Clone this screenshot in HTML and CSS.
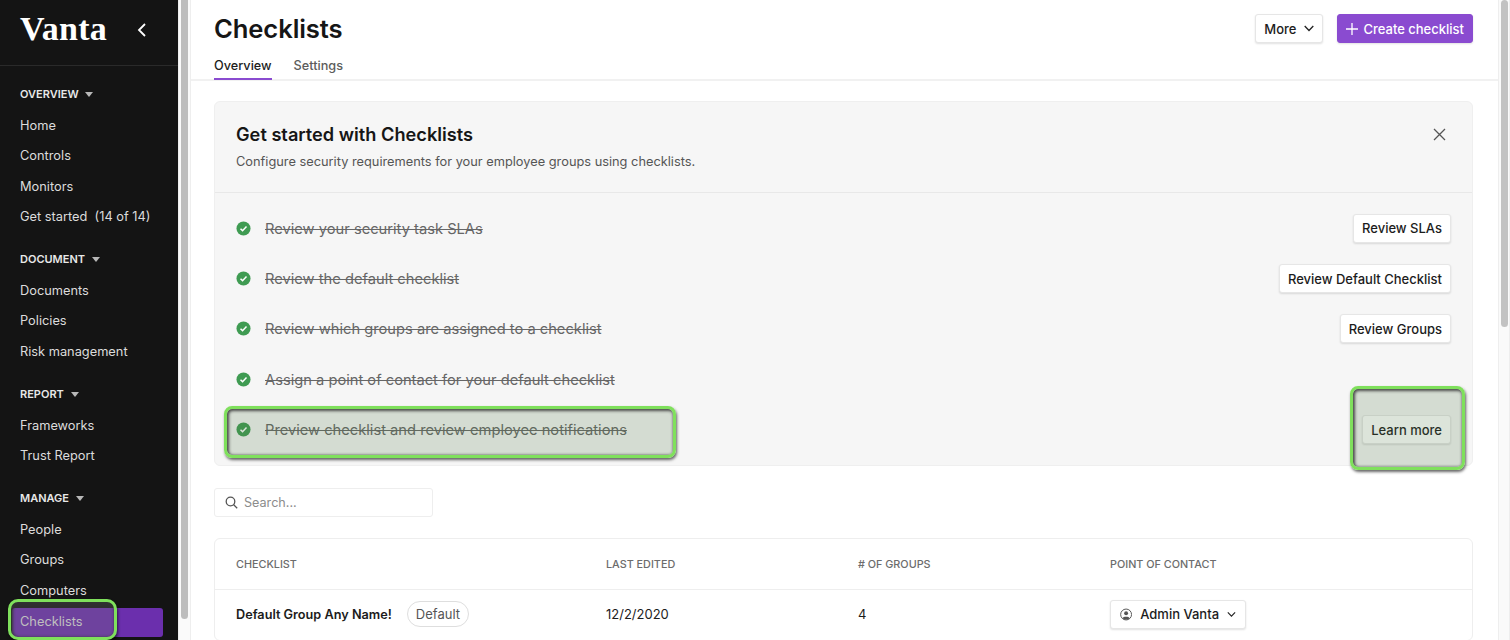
FILE: index.html
```html
<!DOCTYPE html>
<html lang="en">
<head>
<meta charset="utf-8">
<title>Checklists</title>
<link rel="stylesheet" href="styles.css">
</head>
<body>
<div class="app">
  <aside class="sidebar">
    <div class="brand">
      <span class="logo">Vanta</span>
      <svg class="collapse" width="12" height="16" viewBox="0 0 12 16"><path d="M9 2 3 8l6 6" fill="none" stroke="#fff" stroke-width="1.8"/></svg>
    </div>
    <nav class="nav">
      <section class="group">
        <h4 class="group-title">OVERVIEW <i class="caret"></i></h4>
        <a class="item">Home</a><a class="item">Controls</a><a class="item">Monitors</a><a class="item">Get started&nbsp; (14 of 14)</a>
      </section>
      <section class="group">
        <h4 class="group-title">DOCUMENT <i class="caret"></i></h4>
        <a class="item">Documents</a><a class="item">Policies</a><a class="item">Risk management</a>
      </section>
      <section class="group">
        <h4 class="group-title">REPORT <i class="caret"></i></h4>
        <a class="item">Frameworks</a><a class="item">Trust Report</a>
      </section>
      <section class="group">
        <h4 class="group-title">MANAGE <i class="caret"></i></h4>
        <a class="item">People</a><a class="item">Groups</a><a class="item">Computers</a><a class="item active">Checklists</a>
      </section>
    </nav>
    <div class="hl hl-nav"></div>
  </aside>
  <div class="track track-side"><div class="thumb"></div></div>
  <main class="main">
    <header class="page-head">
      <div class="head-top">
        <h1 class="title">Checklists</h1>
        <div class="actions">
          <button class="btn">More <svg width="10" height="7" viewBox="0 0 10 7"><path d="M.7 1 5 5.500 9.300 1" fill="none" stroke="#222" stroke-width="1.3"/></svg></button>
          <button class="btn primary"><svg width="12" height="12" viewBox="0 0 12 12"><path d="M6 0v12M0 6h12" stroke="#fff" stroke-width="1.3"/></svg>Create checklist</button>
        </div>
      </div>
      <div class="tabs"><a class="tab on">Overview</a><a class="tab">Settings</a></div>
    </header>
    <div class="content">
      <section class="card">
        <div class="card-head">
          <div>
            <h2 class="card-title">Get started with Checklists</h2>
            <p class="card-sub">Configure security requirements for your employee groups using checklists.</p>
          </div>
          <svg class="close" width="13" height="13" viewBox="0 0 13 13"><path d="M1 1l11 11M12 1 1 12" stroke="#555" stroke-width="1.3"/></svg>
        </div>
        <div class="rows">
          <div class="row"><svg class="check" viewBox="0 0 16 16"><circle cx="8" cy="8" r="7.5" fill="#3f9b52"/><path d="M4.8 8.2 7 10.3l4.2-4.4" fill="none" stroke="#fff" stroke-width="1.6"/></svg><s class="done">Review your security task SLAs</s><button class="btn">Review SLAs</button></div>
          <div class="row"><svg class="check" viewBox="0 0 16 16"><circle cx="8" cy="8" r="7.5" fill="#3f9b52"/><path d="M4.8 8.2 7 10.3l4.2-4.4" fill="none" stroke="#fff" stroke-width="1.6"/></svg><s class="done">Review the default checklist</s><button class="btn">Review Default Checklist</button></div>
          <div class="row"><svg class="check" viewBox="0 0 16 16"><circle cx="8" cy="8" r="7.5" fill="#3f9b52"/><path d="M4.8 8.2 7 10.3l4.2-4.4" fill="none" stroke="#fff" stroke-width="1.6"/></svg><s class="done">Review which groups are assigned to a checklist</s><button class="btn">Review Groups</button></div>
          <div class="row"><svg class="check" viewBox="0 0 16 16"><circle cx="8" cy="8" r="7.5" fill="#3f9b52"/><path d="M4.8 8.2 7 10.3l4.2-4.4" fill="none" stroke="#fff" stroke-width="1.6"/></svg><s class="done">Assign a point of contact for your default checklist</s></div>
          <div class="row"><svg class="check" viewBox="0 0 16 16"><circle cx="8" cy="8" r="7.5" fill="#3f9b52"/><path d="M4.8 8.2 7 10.3l4.2-4.4" fill="none" stroke="#fff" stroke-width="1.6"/></svg><s class="done">Preview checklist and review employee notifications</s><button class="btn">Learn more</button></div>
        </div>
      </section>
      <div class="search">
        <svg width="13" height="13" viewBox="0 0 13 13"><circle cx="5.5" cy="5.5" r="4.3" fill="none" stroke="#555" stroke-width="1.3"/><path d="m8.7 8.7 3.5 3.5" stroke="#555" stroke-width="1.3"/></svg>
        <span>Search...</span>
      </div>
      <section class="table">
        <div class="tr th"><span>CHECKLIST</span><span>LAST EDITED</span><span># OF GROUPS</span><span>POINT OF CONTACT</span></div>
        <div class="tr td">
          <span class="name"><b>Default Group Any Name!</b><em class="pill">Default</em></span>
          <span>12/2/2020</span>
          <span>4</span>
          <span><button class="btn contact"><svg width="15" height="15" viewBox="0 0 15 15"><circle cx="7.5" cy="7.5" r="6.7" fill="none" stroke="#555" stroke-width="1.2"/><circle cx="7.500" cy="6" r="2.400" fill="#555"/><path d="M3.200 12c1-2.200 7.600-2.200 8.600 0-2 2-6.600 2-8.600 0z" fill="#555"/></svg><span class="contact-name">Admin Vanta</span><svg width="11" height="7" viewBox="0 0 11 7"><path d="M1 1l4.500 4.500L10 1" fill="none" stroke="#222" stroke-width="1.4"/></svg></button></span>
        </div>
      </section>
    </div>
    <div class="hl hl-row"></div>
    <div class="hl hl-btn"></div>
  </main>
  <div class="track track-main"><div class="thumb thumb-main"></div></div>
</div>
</body>
</html>
```
FILE: styles.css
```css
* { box-sizing: border-box; }
html, body { margin: 0; height: 640px; overflow: hidden; }
body { font-family: Inter, "Liberation Sans", sans-serif; color: #1c1c1c; background: #fff; font-size: 13px; }
.app { display: flex; height: 640px; overflow: hidden; }

.sidebar { position: relative; width: 178px; flex: none; background: #141414; color: #e4e4e4; overflow: hidden; }
.brand { height: 66px; padding: 10px 30px 0 20px; display: flex; justify-content: space-between; align-items: flex-start; border-bottom: 1px solid #2a2a2a; }
.logo { font-family: "Liberation Serif", serif; font-weight: 700; font-size: 34px; line-height: 38px; color: #fff; letter-spacing: 0.3px; }
.collapse { margin-top: 12px; }
.nav { padding-top: 16px; }
.group { margin-bottom: 14.5px; }
.group-title { margin: 0 0 4.5px; padding-left: 20px; height: 24px; line-height: 24px; font-size: 11px; font-weight: 600; color: #e8e8e8; }
.caret { display: inline-block; width: 0; height: 0; margin-left: 4px; vertical-align: 1px; border-left: 4px solid transparent; border-right: 4px solid transparent; border-top: 5px solid #b8b8b8; }
.item { display: block; height: 30.6px; line-height: 30.6px; padding-left: 20px; font-size: 12.8px; color: #dcdcdc; }
.item.active { height: 29px; margin: 1.5px 15px 0 12px; padding-left: 8px; line-height: 28px; background: #6b2fad; border-radius: 3px; }

.track { flex: none; background: #fafafa; border-left: 1px solid #eee; border-right: 1px solid #eee; }
.track-side { width: 13px; padding: 0 2px; }
.thumb { width: 7px; height: 619px; background: #bdbdbd; border-radius: 0 0 4px 4px; }
.track-main { width: 12px; padding: 0 2px; }
.thumb-main { height: 327px; border-radius: 4px; background: #c2c2c2; }

.main { position: relative; flex: 1; min-width: 0; }
.page-head { height: 81px; padding: 14px 25px 0 23px; border-bottom: 2px solid #f1f1f1; }
.head-top { display: flex; justify-content: space-between; align-items: flex-start; height: 38px; }
.title { margin: 0; font-size: 25.6px; line-height: 30px; font-weight: 600; letter-spacing: -0.1px; color: #161616; }
.actions { display: flex; gap: 14px; align-items: center; }
.btn { display: inline-flex; align-items: center; justify-content: center; height: 29px; padding: 0 8px; font: 500 13px Inter, "Liberation Sans", sans-serif; color: #1c1c1c; background: #fff; border: 1px solid #e6e6e6; border-radius: 3px; box-shadow: 0 1px 2px rgba(0,0,0,.12); white-space: nowrap; }
.actions .btn svg { margin-left: 8px; }
.btn.primary { color: #fff; background: #8a4bd0; border-color: #8a4bd0; }
.actions .btn.primary svg { margin: 0 5px 0 0; }
.tabs { display: flex; gap: 22px; height: 28px; }
.tab { font-size: 12.7px; line-height: 28px; height: 28px; color: #5c5c5c; font-weight: 500; }
.tab.on { color: #1c1c1c; border-bottom: 2px solid #8a4bd0; }

.content { padding: 20px 25px 0 23px; }
.card { height: 365px; background: #f6f6f6; border: 1px solid #efefef; border-radius: 6px; }
.card-head { height: 91px; padding: 21px 26px 0 21px; display: flex; justify-content: space-between; align-items: flex-start; border-bottom: 1px solid #e8e8e8; }
.card-title { margin: 0 0 8px; font-size: 18.2px; line-height: 22px; font-weight: 600; color: #161616; }
.card-sub { margin: 0; font-size: 12.8px; line-height: 18px; color: #555; }
.close { margin-top: 5px; }
.rows { padding: 10px 21px 0; }
.row { display: flex; align-items: center; height: 50.4px; }
.check { width: 15px; height: 15px; flex: none; margin-right: 14px; }
.done { flex: 1; margin-top: 1px; font-size: 14.7px; color: #666; }
.hl { position: absolute; border: 3px solid #7fe05c; border-radius: 8px; box-shadow: inset 1px 1px 3px 1px rgba(50,50,50,.85), 1px 2px 3px rgba(0,0,0,.6); background: rgba(78,120,72,.2); }
.hl-nav { left: 8px; top: 599px; width: 109px; height: 41px; background: rgba(120,120,120,.28); border-radius: 10px; }
.hl-row { left: 33px; top: 406px; width: 452px; height: 52px; }
.hl-btn { left: 1159px; top: 386px; width: 115px; height: 84px; }

.search { display: flex; align-items: center; gap: 6px; width: 219px; height: 29px; margin-top: 22px; padding: 0 0 0 10px; background: #fff; border: 1px solid #eee; border-radius: 3px; color: #8c8c8c; font-size: 12.6px; }
.table { margin-top: 21px; border: 1px solid #eee; border-radius: 6px; }
.tr { display: grid; grid-template-columns: 370px 252px 252px 1fr; padding-left: 21px; align-items: center; }
.th { height: 51px; border-bottom: 1px solid #eee; font-size: 10.8px; font-weight: 500; color: #6c6c6c; }
.td { height: 50px; padding-bottom: 2px; font-size: 13px; font-weight: 400; }
.name { display: flex; align-items: center; gap: 15px; }
.name b { font-weight: 600; font-size: 12.7px; }
.pill { font-style: normal; font-weight: 400; color: #555; border: 1px solid #dedede; border-radius: 13px; padding: 4px 8px; line-height: 16px; }
.contact { justify-content: flex-start; gap: 8px; padding: 0 9px; width: 136px; }
.contact-name { flex: 1; text-align: left; }
```
